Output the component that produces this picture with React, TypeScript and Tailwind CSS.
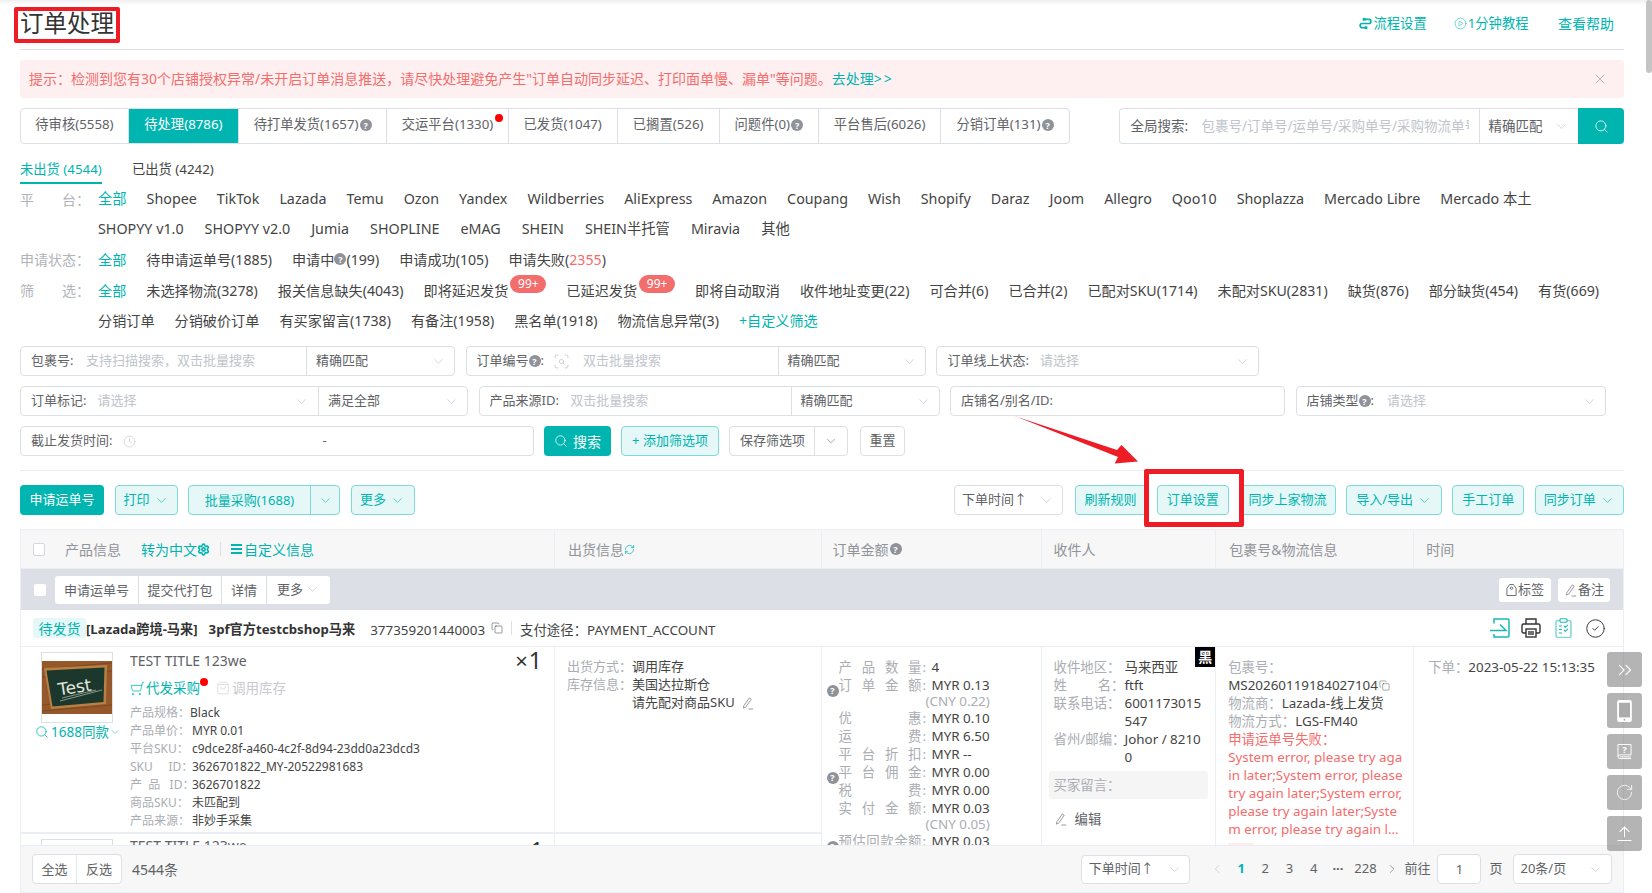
import React from "react";
import { ChevronDown, ChevronLeft, ChevronRight, ChevronsRight, Clock, Copy, Search, X, RotateCw, CirclePlay, ShoppingCart, CircleCheck, Settings, RefreshCw, ScanSearch, ShoppingBag } from "lucide-react";

const T = "text-[#00b5b0]";

function Q() {
  return <span className="inline-flex w-3 h-3 rounded-full bg-[#8f9299] text-white text-[9px] font-bold items-center justify-center leading-none shrink-0">?</span>;
}

function Chev({ c = "text-[#b8bcc4]" }: { c?: string }) {
  return <ChevronDown size={15} strokeWidth={1} className={c + " shrink-0"} />;
}

const tabs: [string, number, boolean, boolean?][] = [
  ["待审核(5558)", 109, false],
  ["待处理(8786)", 110, false],
  ["待打单发货(1657)", 148.5, true],
  ["交运平台(1330)", 121.5, false, true],
  ["已发货(1047)", 109, false],
  ["已搁置(526)", 102, false],
  ["问题件(0)", 99.5, true],
  ["平台售后(6026)", 122.2, false],
  ["分销订单(131)", 127.9, true],
];

function Tabs() {
  return (
    <div className="flex h-[36px] w-[1050px] border border-[#dcdfe6] rounded-[4px] overflow-hidden bg-white">
      {tabs.map(([t, w, q, dot], i) => (
        <div
          key={t}
          style={{ width: i === 0 ? w - 1 : w }}
          className={
            "relative flex items-center justify-center gap-px pb-[2px] text-[13.3px] border-r border-[#dcdfe6] last:border-r-0 " +
            (i === 1 ? "bg-[#00b5b0] text-white" : "text-[#606266]")
          }
        >
          {t}
          {q && <Q />}
          {dot && <span className="absolute right-[5px] top-[5px] w-2 h-2 rounded-full bg-[#ff0000]" />}
        </div>
      ))}
    </div>
  );
}

function Row({ label, children, h, size = "text-[14.15px]", gap = "gap-5" }: { label: React.ReactNode; children: React.ReactNode; h: string; size?: string; gap?: string }) {
  return (
    <div className={"flex items-center text-[#444] " + size + " " + h}>
      <div className="w-[78px] shrink-0 text-[#b1b4ba] text-[14px]">{label}</div>
      <div className={"flex items-center whitespace-nowrap " + gap}>{children}</div>
    </div>
  );
}

function Spread({ a, b }: { a: string; b: string }) {
  return (
    <div className="flex justify-between w-[70px]">
      <span>{a}</span>
      <span>{b}</span>
    </div>
  );
}

function Field({ w, children, className = "" }: { w: string; children: React.ReactNode; className?: string }) {
  return <div className={"flex h-[30px] items-center border border-[#dcdfe6] rounded-[4px] text-[13px] text-[#606266] bg-white whitespace-nowrap shrink-0 " + w + " " + className}>{children}</div>;
}

function Sel({ w, text, ph }: { w: string; text: string; ph?: boolean }) {
  return (
    <div className={"flex items-center justify-between h-full pl-[9px] pr-[8px] border-l border-[#dcdfe6] shrink-0 " + w}>
      <span className={ph ? "text-[#c0c4cc]" : "text-[#606266]"}>{text}</span>
      <Chev />
    </div>
  );
}

function Lbtn({ w, children, className = "" }: { w: string; children: React.ReactNode; className?: string }) {
  return <div className={"flex h-[30px] items-center justify-center gap-1 rounded-[4px] border border-[#7fdad7] bg-[#e5f7f7] text-[13px] text-[#00b5b0] shrink-0 whitespace-nowrap " + w + " " + className}>{children}</div>;
}

function Kv({ l, v, lw = "" }: { l: string; v: React.ReactNode; lw?: string }) {
  return (
    <div className="flex h-[18px] items-center whitespace-nowrap">
      <span className={"text-[#aaadb3] whitespace-pre " + lw}>{l}</span>
      <span className="text-[#444]">{v}</span>
    </div>
  );
}

function Sp({ s }: { s: string }) {
  return (
    <span className="flex justify-between w-[83px] text-[#aaadb3] shrink-0">
      {s.split("").map((c, i) => <span key={i}>{c}</span>)}
    </span>
  );
}

function Amt({ s, v, q }: { s: string; v: string; q?: boolean }) {
  return (
    <div className="relative flex h-[18px] items-center whitespace-nowrap pl-[17px]">
      {q && <span className="absolute left-[5px] top-[3px]"><Q /></span>}
      <Sp s={s} />
      <span className="text-[#aaadb3] w-[10px] pl-[1px]">:</span>
      <span className="text-[#444]">{v}</span>
    </div>
  );
}

function Cny({ v }: { v: string }) {
  return <div className="h-[15px] leading-[15px] pl-[104px] text-[#aaadb3] whitespace-nowrap">{v}</div>;
}

function Board() {
  return (
    <svg viewBox="0 0 70 53" className="w-[70px] h-[53px] block">
      <rect width="70" height="53" fill="#94582b" />
      <path d="M0 8 L70 2 M0 16 L70 10 M0 50 L70 44 M0 44 L12 43" stroke="#75401a" strokeWidth="1" opacity="0.6" />
      <polygon points="2,7 65,4 64,43 9,48" fill="#b98044" />
      <polygon points="4.5,9.5 62.5,6.5 61.5,41 10.5,45.5" fill="#1c382d" />
      <text x="33" y="32" textAnchor="middle" transform="rotate(-9 33 28)" fontFamily="'DejaVu Sans', sans-serif" fontSize="17" fill="#e4e6df">Test</text>
      <path d="M18 40 L60 29 M20 37 L54 29" stroke="#cfd3c9" strokeWidth="0.6" />
    </svg>
  );
}

function IconLogin() {
  return (
    <svg viewBox="0 0 20 20" className="w-[20px] h-[20px]" fill="none" stroke="#1ab8b3" strokeWidth="1.5">
      <path d="M4 5.5V1h14a1 1 0 0 1 1 1v16a1 1 0 0 1-1 1H4v-3" />
      <path d="M0 12.5h16L10 6.5" />
    </svg>
  );
}

function IconPrinter() {
  return (
    <svg viewBox="0 0 20 20" className="w-[20px] h-[20px]" fill="none" stroke="#333" strokeWidth="1.4">
      <path d="M5 6V1h10v5" />
      <rect x="1" y="6" width="18" height="9" rx="1.5" />
      <rect x="5" y="11" width="10" height="8" fill="#fff" />
      <path d="M8 13v4M10 13v4M12 13v4" />
    </svg>
  );
}

function IconClip() {
  return (
    <svg viewBox="0 0 17 20" className="w-[17px] h-[20px]" fill="none" stroke="#1ab8b3" strokeWidth="1.1">
      <rect x="1" y="2.5" width="15" height="17" rx="2" stroke="#7fd8d5" strokeWidth="1.5" />
      <rect x="5" y="0.8" width="7" height="3.5" rx="1" fill="#fff" />
      <path d="M4 8h3M4 11.5h3M4 15h3M9 8l1.3 1.3L13 6.8M9 12l1.3 1.3L13 10.8" />
    </svg>
  );
}

function IconFlow() {
  return (
    <svg viewBox="0 0 16 16" className="w-[15px] h-[15px]" fill="none" stroke="#00b5b0" strokeWidth="1.8">
      <path d="M7 3.5h4.5a2.2 2.2 0 0 1 0 4.5H4.5a2.2 2.2 0 0 0 0 4.5H9" />
      <rect x="5" y="2" width="3" height="3" fill="#00b5b0" stroke="none" />
      <rect x="7" y="11" width="3" height="3" fill="#00b5b0" stroke="none" />
    </svg>
  );
}

function IconTag() {
  return (
    <svg viewBox="0 0 12 14" className="w-[11px] h-[14px]" fill="none" stroke="#606266" strokeWidth="1">
      <path d="M1 5 L4 1 H8 L11 5 V13 H1 Z" />
      <circle cx="6" cy="5" r="1.3" />
    </svg>
  );
}

function IconEdit() {
  return (
    <svg viewBox="0 0 14 14" className="w-[13px] h-[14px]" fill="none" stroke="#909399" strokeWidth="1">
      <path d="M3 10 L9 1.5 L11 3 L5 11.5 L2.5 12.5 Z" />
      <path d="M8 13.5h5" />
    </svg>
  );
}

function Phone() {
  return (
    <svg viewBox="0 0 16 24" className="w-[15px] h-[22px]">
      <rect x="0" y="0" width="16" height="24" rx="2.5" fill="#fff" />
      <rect x="2" y="3" width="12" height="16" fill="#ababab" />
      <circle cx="8" cy="21.5" r="1" fill="#ababab" />
    </svg>
  );
}

function Book() {
  return (
    <svg viewBox="0 0 16 18" className="w-[15px] h-[18px]" fill="none" stroke="#fff" strokeWidth="1">
      <path d="M1 14V1h14v11H3a2 2 0 0 0-2 2 2 2 0 0 0 2 2h12" />
      <path d="M3 14.2h12" />
      <text x="8" y="10" textAnchor="middle" fontSize="10" fontWeight="700" fill="#fff" stroke="none">?</text>
    </svg>
  );
}

function Upl() {
  return (
    <svg viewBox="0 0 14 14" className="w-[15px] h-[15px]" fill="none" stroke="#fff" strokeWidth="1">
      <path d="M7 10.5V1M2.5 5.5 L7 1 L11.5 5.5M0.5 13.5h13" />
    </svg>
  );
}

function Product() {
  return (
    <div className="flex h-[187px] border-b-2 border-[#ebeef5]">
      <div className="relative w-[534px] border-r border-[#ebeef5] text-[12px]">
        <div className="flex pt-[5px]">
          <div className="w-[109px] shrink-0 flex flex-col items-start">
            <div className="ml-[20px] w-[72px] h-[71px] border border-[#dcdfe6] flex items-center overflow-hidden shrink-0"><Board /></div>
            <div className={"flex items-center text-[13.5px] -mt-[1px] ml-[14px] whitespace-nowrap " + T}>
              <Search size={14} strokeWidth={1.3} className="mr-[2px]" />1688同款<ChevronDown size={12} strokeWidth={1} />
            </div>
          </div>
          <div className="flex-1 min-w-0">
            <div className="flex justify-between pr-[12px] h-[20px] -mt-[2px] items-center text-[14px] text-[#606266]">
              <span>TEST TITLE 123we</span>
              <span className="text-[#333] leading-none flex items-center"><span className="text-[22px] mr-[1px]">×</span><span className="text-[23px]">1</span></span>
            </div>
            <div className="flex items-center h-[20px] mt-[8px] text-[13.5px] whitespace-nowrap">
              <span className={"relative flex items-center " + T}>
                <ShoppingCart size={15} strokeWidth={1.2} className="mr-[1px] -scale-x-100" />代发采购
                <span className="absolute -right-[8px] top-0 w-2 h-2 rounded-full bg-[#ff0000]" />
              </span>
              <span className="ml-[16px] flex items-center text-[#c8cad0] gap-[2px]"><ShoppingBag size={14} strokeWidth={1} />调用库存</span>
            </div>
            <div className="mt-[6px]">
              <Kv l="产品规格：" v="Black" lw="w-[60px]" />
              <Kv l="产品单价：" v="MYR 0.01" lw="w-[62px]" />
              <Kv l="平台SKU：" v="c9dce28f-a460-4c2f-8d94-23dd0a23dcd3" lw="w-[62px]" />
              <Kv l="SKU     ID：" v="3626701822_MY-20522981683" lw="w-[62px]" />
              <Kv l="产  品   ID：" v="3626701822" lw="w-[62px]" />
              <Kv l="商品SKU：" v="未匹配到" lw="w-[62px]" />
              <Kv l="产品来源：" v="非妙手采集" lw="w-[62px]" />
            </div>
          </div>
        </div>
      </div>
      <div className="w-[265.5px] pt-[11px] pl-[12px] text-[13px]">
        <Kv l="出货方式：" v="调用库存" lw="w-[65px]" />
        <Kv l="库存信息：" v="美国达拉斯仓" lw="w-[65px]" />
        <div className="flex h-[18px] items-center pl-[65px] text-[#444] whitespace-nowrap gap-[6px]">请先配对商品SKU<IconEdit /></div>
      </div>
    </div>
  );
}

function Order() {
  return (
    <div className="flex">
      <div className="w-[799.5px] shrink-0">
        <Product />
        <div className="relative h-[60px]">
          <div className="absolute left-[20px] top-[5px] w-[72px] h-[60px] border border-[#dcdfe6]" />
          <div className="absolute left-[109px] top-[1px] text-[14px] text-[#606266]">TEST TITLE 123we</div>
          <div className="absolute left-[496px] top-[-1px] text-[23px] text-[#333]">×1</div>
          <div className="absolute left-[533px] top-0 bottom-0 w-px bg-[#ebeef5]" />
        </div>
      </div>
      <div className="w-[220px] shrink-0 border-l border-[#ebeef5] pt-[11px] text-[13.4px] h-[300px]">
        <Amt s="产品数量" v="4" />
        <Amt s="订单金额" v="MYR 0.13" q />
        <Cny v="(CNY 0.22)" />
        <Amt s="优惠" v="MYR 0.10" />
        <Amt s="运费" v="MYR 6.50" />
        <Amt s="平台折扣" v="MYR --" />
        <Amt s="平台佣金" v="MYR 0.00" q />
        <Amt s="税费" v="MYR 0.00" />
        <Amt s="实付金额" v="MYR 0.03" />
        <Cny v="(CNY 0.05)" />
        <Amt s="预估回款余额" v="MYR 0.03" q />
      </div>
      <div className="relative w-[174.7px] shrink-0 border-l border-[#ebeef5] pt-[11px] text-[13.4px]">
        <span className="absolute right-0 top-0 w-[20px] h-[20px] bg-black text-white text-[14px] font-bold leading-[20px] text-center">黑</span>
        <div className="pl-[12px] leading-[18px]">
          <div className="flex"><span className="w-[71px] text-[#aaadb3] shrink-0">收件地区：</span><span className="text-[#444]">马来西亚</span></div>
          <div className="flex"><span className="w-[71px] text-[#aaadb3] shrink-0 flex"><span className="w-[46px]">姓</span>名：</span><span className="text-[#444]">ftft</span></div>
          <div className="flex"><span className="w-[71px] text-[#aaadb3] shrink-0">联系电话：</span><span className="text-[#444] w-[80px]">6001173015<br />547</span></div>
          <div className="flex"><span className="w-[71px] text-[#aaadb3] shrink-0 whitespace-nowrap">省州/邮编：</span><span className="text-[#444] w-[84px]">Johor / 8210<br />0</span></div>
        </div>
        <div className="ml-[7px] mr-[7px] mt-[5px] h-[28px] rounded-[3px] bg-[#f5f5f5] pl-[5px] flex items-center text-[#aaadb3]">买家留言：</div>
        <div className="pl-[12px] mt-[11px] flex items-center h-[18px] text-[#606266]"><IconEdit /><span className="ml-[8px]">编辑</span></div>
      </div>
      <div className="w-[198px] shrink-0 border-l border-[#ebeef5] pt-[11px] pl-[12px] text-[13.4px] leading-[18px] whitespace-nowrap">
        <div className="text-[#aaadb3]">包裹号：</div>
        <div className="text-[#444] flex items-center">MS20260119184027104<Copy size={11} strokeWidth={1} className="ml-[1px]" /></div>
        <div><span className="text-[#aaadb3]">物流商：</span><span className="text-[#444]">Lazada-线上发货</span></div>
        <div><span className="text-[#aaadb3]">物流方式：</span><span className="text-[#444]">LGS-FM40</span></div>
        <div className="text-[#f56c6c]">申请运单号失败：</div>
        <div className="text-[#f56c6c]">System error, please try aga<br />in later;System error, please<br />try again later;System error,<br />please try again later;Syste<br />m error, please try again l...</div>
        <div className="w-[26px] h-[18px] mt-[5px] rounded-[2px] bg-[#fdeee6]" />
      </div>
      <div className="flex-1 border-l border-[#ebeef5] pt-[11px] pl-[14px] text-[13.4px] leading-[18px] whitespace-nowrap">
        <span className="text-[#aaadb3]">下单：</span><span className="text-[#444]">2023-05-22 15:13:35</span>
      </div>
    </div>
  );
}

function Header() {
  const cols: [string, React.ReactNode][] = [
    ["w-[534px]", (
      <div className="flex items-center pl-[12px]">
        <span className="w-[12px] h-[13px] border border-[#d4d6dc] rounded-[2px] bg-white mr-[20px] shrink-0" />
        <span className="w-[76px]">产品信息</span>
        <span className={"flex items-center " + T}>转为中文<Settings size={13} strokeWidth={3} /></span>
        <span className="w-px h-[14px] bg-[#dcdfe6] mx-[10px]" />
        <span className={"flex items-center gap-[2px] " + T}><span className="flex flex-col gap-[2px] w-[11px]"><i className="h-[2px] bg-[#00b5b0]" /><i className="h-[2px] bg-[#00b5b0]" /><i className="h-[2px] bg-[#00b5b0]" /></span>自定义信息</span>
      </div>
    )],
    ["w-[266.5px] pl-[13px]", <span className="flex items-center">出货信息<RefreshCw size={11} strokeWidth={1.5} className="text-[#00b5b0]" /></span>],
    ["w-[220px] pl-[11px]", <span className="flex items-center gap-px">订单金额<Q /></span>],
    ["w-[174.7px] pl-[12px]", "收件人"],
    ["w-[198px] pl-[13px]", "包裹号&物流信息"],
    ["flex-1 pl-[12px]", "时间"],
  ];
  return (
    <div className="flex h-[39px] bg-[#f7f7f7] border-b border-[#ebeef5] text-[14px] text-[#909399]">
      {cols.map(([c, n], i) => (
        <div key={i} className={"flex items-center border-r border-[#ebeef5] last:border-r-0 whitespace-nowrap " + c}>{n}</div>
      ))}
    </div>
  );
}

function Toolbar2() {
  return (
    <div className="flex items-center justify-between h-[41px] bg-[#dcdfe6] pl-[13px] pr-[13px] text-[13px] text-[#606266]">
      <div className="flex items-center">
        <span className="w-[12px] h-[12px] rounded-[2px] bg-white mr-[9px]" />
        <div className="flex h-[28px] rounded-[3px] bg-white items-center">
          <span className="w-[84px] text-center border-r border-[#dcdfe6] leading-[28px]">申请运单号</span>
          <span className="w-[83px] text-center border-r border-[#dcdfe6] leading-[28px]">提交代打包</span>
          <span className="w-[45px] text-center border-r border-[#dcdfe6] leading-[28px]">详情</span>
          <span className="w-[63px] flex items-center justify-center gap-[2px]">更多<Chev /></span>
        </div>
      </div>
      <div className="flex gap-[7px]">
        <span className="flex items-center justify-center gap-[1px] w-[52px] h-[24px] bg-white rounded-[3px]"><IconTag />标签</span>
        <span className="flex items-center justify-center gap-[1px] w-[52px] h-[24px] bg-white rounded-[3px]"><IconEdit />备注</span>
      </div>
    </div>
  );
}

function OrderHead() {
  return (
    <div className="flex items-center h-[37px] border-b border-[#ebeef5] pl-[12px] pr-[17px] text-[13.4px] text-[#333] whitespace-nowrap">
      <span className="flex items-center justify-center w-[53px] h-[20px] bg-[#e5f7f7] text-[#00b5b0] rounded-[3px] text-[14px]">待发货</span>
      <b className="text-[13.2px] relative top-[2px]">[Lazada跨境-马来]</b>
      <b className="ml-[11px] text-[13.2px] relative top-[2px]">3pf官方testcbshop马来</b>
      <span className="ml-[15px] text-[#444] relative top-[2px]">377359201440003</span>
      <Copy size={12} strokeWidth={1} className="ml-[6px]" />
      <span className="w-px h-[14px] bg-[#dcdfe6] mx-[8px]" />
      <span className="text-[#444] relative top-[2px]">支付途径：PAYMENT_ACCOUNT</span>
      <div className="ml-auto flex items-center">
        <IconLogin />
        <span className="ml-[11.5px]"><IconPrinter /></span>
        <span className="ml-[14px]"><IconClip /></span>
        <CircleCheck size={21} strokeWidth={1.1} className="text-[#333] ml-[13px]" />
      </div>
    </div>
  );
}

function Footer() {
  return (
    <div className="flex items-center h-[48px] shrink-0 bg-[#f7f7f7] border border-[#ebeef5] pl-[11px] text-[13px] text-[#606266] whitespace-nowrap">
      <div className="flex h-[30px] border border-[#dcdfe6] rounded-[4px] bg-white items-center">
        <span className="w-[44px] text-center border-r border-[#e4e7ed] leading-[28px]">全选</span>
        <span className="w-[44px] text-center leading-[28px]">反选</span>
      </div>
      <span className="ml-[10px] text-[14px]">4544条</span>
      <div className="ml-auto flex items-center">
        <div className="flex items-center justify-between w-[109px] h-[29px] border border-[#dcdfe6] rounded-[4px] bg-white px-[7px]">下单时间↑<Chev /></div>
        <ChevronLeft size={14} strokeWidth={1} className="ml-[20px] text-[#b8bcc4]" />
        <span className="w-[24.2px] text-center ml-[5.4px] font-bold text-[#00b5b0]">1</span>
        <span className="w-[24.2px] text-center">2</span>
        <span className="w-[24.2px] text-center">3</span>
        <span className="w-[24.2px] text-center">4</span>
        <span className="w-[24.2px] text-center font-bold">···</span>
        <span className="w-[31px] text-center">228</span>
        <ChevronRight size={14} strokeWidth={1} className="ml-[4.5px]" />
        <span className="ml-[5px]">前往</span>
        <div className="ml-[7px] w-[44px] h-[30px] border border-[#dcdfe6] rounded-[4px] bg-white text-center leading-[28px]">1</div>
        <span className="ml-[8px]">页</span>
        <div className="ml-[10px] flex items-center justify-between w-[99px] h-[30px] border border-[#dcdfe6] rounded-[4px] bg-white pl-[7px] pr-[8px]">20条/页<Chev /></div>
        <span className="w-[11.5px]" />
      </div>
    </div>
  );
}

const platforms1 = ["Shopee","TikTok","Lazada","Temu","Ozon","Yandex","Wildberries","AliExpress","Amazon","Coupang","Wish","Shopify","Daraz","Joom","Allegro","Qoo10","Shoplazza","Mercado Libre","Mercado 本土"];
const platforms2 = ["SHOPYY v1.0","SHOPYY v2.0","Jumia","SHOPLINE","eMAG","SHEIN","SHEIN半托管","Miravia","其他"];
const screen1: [string, boolean?][] = [["未选择物流(3278)"],["报关信息缺失(4043)"],["即将延迟发货", true],["已延迟发货", true],["即将自动取消"],["收件地址变更(22)"],["可合并(6)"],["已合并(2)"],["已配对SKU(1714)"],["未配对SKU(2831)"],["缺货(876)"],["部分缺货(454)"],["有货(669)"]];

function Badge() {
  return <span className="absolute -right-[38px] -top-[5px] w-[36px] h-[18px] rounded-full bg-[#f36d6d] text-white text-[12px] leading-[18px] text-center">99+</span>;
}

function FloatBtn({ children }: { children: React.ReactNode }) {
  return <div className="w-[35px] h-[35px] rounded-[3px] bg-[#777]/55 text-white flex items-center justify-center">{children}</div>;
}

export default function App() {
  return (
    <div className="relative w-[1652px] h-[893px] overflow-hidden bg-white flex flex-col pl-5 pr-[28px] [font-family:'Noto_Sans','Noto_Sans_CJK_SC',sans-serif]">
      <div className="absolute left-0 right-0 top-0 h-[5px] bg-gradient-to-b from-[#efefef] to-white" />
      <div className="absolute right-0 top-0 w-[6px] h-[73px] rounded-[3px] bg-[#c4c4c4]" />

      <div className="flex items-center justify-between h-[50px] shrink-0 border-b border-[#dcdfe6] relative">
        <span className="text-[23.5px] text-[#333] leading-none pb-[2px]">订单处理</span>
        <div className={"flex items-center text-[13.3px] pr-[10px] pb-[2px] " + T}>
          <span className="flex items-center gap-px"><IconFlow />流程设置</span>
          <span className="flex items-center ml-[27px] gap-px"><CirclePlay size={13} strokeWidth={1} />1分钟教程</span>
          <span className="ml-[29.5px] text-[14px]">查看帮助</span>
        </div>
      </div>

      <div className="flex items-center justify-between h-[38px] mt-[10px] shrink-0 rounded-[4px] bg-[#fef0f0] pl-[9px] pr-[16px] pb-[1px] text-[14px] text-[#f56c6c]">
        <span>提示：检测到您有30个店铺授权异常/未开启订单消息推送，请尽快处理避免产生"订单自动同步延迟、打印面单慢、漏单"等问题。<span className={T}>去处理<span className="tracking-[2px]">&gt;&gt;</span></span></span>
        <X size={16} strokeWidth={1} className="text-[#999]" />
      </div>

      <div className="flex items-start justify-between mt-[10px] h-[36px] shrink-0">
        <Tabs />
        <div className="flex h-[36px] w-[504.6px]">
          <div className="flex flex-1 items-center border border-r-0 border-[#dcdfe6] rounded-l-[4px] text-[13.5px] whitespace-nowrap overflow-hidden">
            <span className="pl-[10px] w-[81px] text-[#606266] shrink-0">全局搜索:</span>
            <span className="w-[268px] overflow-hidden text-[#c0c4cc] shrink-0">包裹号/订单号/运单号/采购单号/采购物流单号</span>
            <div className="flex items-center justify-between h-full pl-[8px] pr-[9px] border-l border-[#dcdfe6] flex-1 ml-[10px]">
              <span className="text-[#606266]">精确匹配</span><Chev />
            </div>
          </div>
          <div className="w-[46px] bg-[#00b5b0] rounded-r-[4px] flex items-center justify-center"><Search size={15} strokeWidth={1.3} className="text-white" /></div>
        </div>
      </div>

      <div className="flex items-start h-[40px] shrink-0 gap-[30px] text-[13.3px] pt-[11px]">
        <div className="h-[29px] w-[82px] flex flex-col text-[#00b5b0] whitespace-nowrap">
          <span className="leading-[18px] mt-[5px]">未出货 (4544)</span>
          <span className="block h-[2px] mt-[4px] bg-[#00b5b0]" />
        </div>
        <div className="h-[29px] text-[#444] whitespace-nowrap"><span className="block leading-[18px] mt-[5px]">已出货 (4242)</span></div>
      </div>

      <Row h="h-[30px] shrink-0" size="text-[14.3px]" label={<Spread a="平" b="台：" />}>
        <span className={T}>全部</span>
        {platforms1.map(p => <span key={p}>{p}</span>)}
      </Row>
      <Row h="h-[30px] shrink-0" size="text-[14.3px]" gap="gap-[21px]" label="">
        {platforms2.map(p => <span key={p}>{p}</span>)}
      </Row>
      <Row h="h-[31px] shrink-0" label="申请状态：">
        <span className={T}>全部</span>
        <span>待申请运单号(1885)</span>
        <span className="flex items-center">申请中<Q />(199)</span>
        <span>申请成功(105)</span>
        <span>申请失败(<span className="text-[#f56c6c]">2355</span>)</span>
      </Row>
      <Row h="h-[31px] shrink-0" label={<Spread a="筛" b="选：" />}>
        <span className={T}>全部</span>
        {screen1.map(([t, b]) => <span key={t} className={"relative " + (b ? "mr-[38px]" : "")}>{t}{b && <Badge />}</span>)}
      </Row>
      <Row h="h-[30px] shrink-0" label="">
        {["分销订单","分销破价订单","有买家留言(1738)","有备注(1958)","黑名单(1918)","物流信息异常(3)"].map(t => <span key={t}>{t}</span>)}
        <span className={T}>+自定义筛选</span>
      </Row>

      <div className="flex gap-[10.5px] mt-[10px] shrink-0">
        <Field w="w-[435px]">
          <span className="pl-[10px] shrink-0 w-[285px]">包裹号: <span className="text-[#c0c4cc] ml-[9px]">支持扫描搜索，双击批量搜索</span></span>
          <Sel w="flex-1" text="精确匹配" />
        </Field>
        <Field w="w-[460.4px]">
          <span className="pl-[10px] shrink-0 w-[311px] flex items-center">订单编号<Q />: <ScanSearch size={17} strokeWidth={1} className="text-[#b8bcc4] ml-[9px]" /><span className="text-[#c0c4cc] ml-[13px]">双击批量搜索</span></span>
          <Sel w="flex-1" text="精确匹配" />
        </Field>
        <Field w="w-[323px]">
          <span className="pl-[10px]">订单线上状态:</span><span className="text-[#c0c4cc] ml-[11px]">请选择</span>
          <span className="ml-auto pr-[8px]"><Chev /></span>
        </Field>
      </div>
      <div className="flex gap-[10.5px] mt-[10px] shrink-0">
        <Field w="w-[448px]">
          <span className="pl-[10px]">订单标记:</span><span className="text-[#c0c4cc] ml-[11px]">请选择</span>
          <span className="ml-auto pr-[9px]"><Chev /></span>
          <Sel w="w-[149px]" text="满足全部" />
        </Field>
        <Field w="w-[461px]">
          <span className="pl-[10px] shrink-0 w-[311px]">产品来源ID: <span className="text-[#c0c4cc] ml-[8px]">双击批量搜索</span></span>
          <Sel w="flex-1" text="精确匹配" />
        </Field>
        <Field w="w-[335px]"><span className="pl-[10px]">店铺名/别名/ID:</span></Field>
        <Field w="w-[310px]">
          <span className="pl-[10px] flex items-center">店铺类型<Q />:</span><span className="text-[#c0c4cc] ml-[13px]">请选择</span>
          <span className="ml-auto pr-[8px]"><Chev /></span>
        </Field>
      </div>
      <div className="flex gap-[10px] mt-[10px] shrink-0">
        <Field w="w-[514px]">
          <span className="pl-[10px] flex items-center">截止发货时间:</span>
          <Clock size={13} strokeWidth={1} className="text-[#b8bcc4] ml-[11px]" />
          <span className="ml-[186px]">-</span>
        </Field>
        <div className="flex h-[30px] w-[67px] items-center justify-center gap-[5px] rounded-[4px] bg-[#00b5b0] text-white text-[14px]"><Search size={14} strokeWidth={1.3} />搜索</div>
        <Lbtn w="w-[98px]">+ 添加筛选项</Lbtn>
        <Field w="w-[119px]">
          <span className="pl-[10px] w-[84px] shrink-0">保存筛选项</span>
          <span className="flex-1 h-full border-l border-[#dcdfe6] flex items-center justify-center"><ChevronDown size={14} strokeWidth={1} /></span>
        </Field>
        <Field w="w-[45px] justify-center ml-[2px]">重置</Field>
      </div>

      <div className="h-px bg-[#ebeef5] mt-[14px] shrink-0" />

      <div className="flex items-center justify-between mt-[14px] h-[30px] shrink-0">
        <div className="flex gap-[10.5px]">
          <div className="flex h-[30px] w-[84px] items-center justify-center rounded-[4px] bg-[#00b5b0] text-white text-[13px]">申请运单号</div>
          <Lbtn w="w-[63px]">打印<Chev c="text-[#00b5b0]" /></Lbtn>
          <Lbtn w="w-[152px] !justify-start !gap-0">
            <span className="w-[122px] text-center border-r border-[#7fdad7] leading-[28px]">批量采购(1688)</span>
            <span className="flex-1 flex justify-center"><Chev c="text-[#00b5b0]" /></span>
          </Lbtn>
          <Lbtn w="w-[64px]">更多<Chev c="text-[#00b5b0]" /></Lbtn>
        </div>
        <div className="flex gap-[10.2px] items-center">
          <div className="flex items-center justify-between w-[109.5px] h-[30px] border border-[#dcdfe6] rounded-[4px] pl-[7px] pr-[8px] text-[13px] text-[#606266] mr-px">下单时间↑<Chev /></div>
          <Lbtn w="w-[72px]">刷新规则</Lbtn>
          <Lbtn w="w-[72px]">订单设置</Lbtn>
          <Lbtn w="w-[97px]">同步上家物流</Lbtn>
          <Lbtn w="w-[96px]">导入/导出<Chev c="text-[#00b5b0]" /></Lbtn>
          <Lbtn w="w-[72px]">手工订单</Lbtn>
          <Lbtn w="w-[89.5px]">同步订单<Chev c="text-[#00b5b0]" /></Lbtn>
        </div>
      </div>

      <div className="flex-1 min-h-0 mt-[14px] overflow-hidden border-l border-r border-t border-[#ebeef5]">
        <Header />
        <Toolbar2 />
        <OrderHead />
        <Order />
      </div>
      <Footer />

      {/* annotations over the page */}
      <div className="absolute left-[14px] top-[7px] w-[106px] h-[36px] border-[4px] border-[#ee1c25] rounded-[2px]" />
      <div className="absolute left-[1143.5px] top-[469px] w-[100px] h-[58px] border-[5px] border-[#ee1c25] rounded-[2px]" />
      <svg className="absolute left-[1010px] top-[412px] w-[135px] h-[56px]" viewBox="1010 412 135 56">
        <polygon points="1014.5,416 1117,450 1121.5,445 1138,461.5 1114.7,463.5 1118,457" fill="#ee1c25" />
      </svg>

      <div className="absolute left-[1607px] top-[652px] flex flex-col gap-[6px]">
        <FloatBtn><ChevronsRight size={22} strokeWidth={1.2} /></FloatBtn>
        <FloatBtn><Phone /></FloatBtn>
        <FloatBtn><Book /></FloatBtn>
        <FloatBtn><RotateCw size={19} strokeWidth={1} /></FloatBtn>
        <FloatBtn><Upl /></FloatBtn>
      </div>
    </div>
  );
}
